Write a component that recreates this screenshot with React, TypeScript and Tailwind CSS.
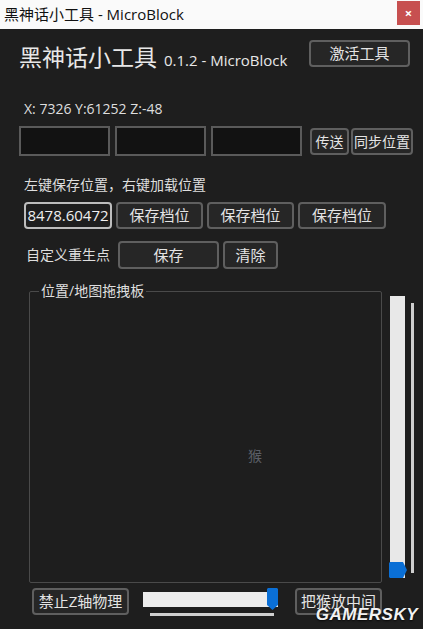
import type { ReactNode } from "react";

const FONT = "font-['Open_Sans','Noto_Sans_CJK_SC',sans-serif]";

function Btn({ children, className = "" }: { children: ReactNode; className?: string }) {
  return (
    <button
      className={`flex items-center justify-center whitespace-nowrap rounded-[4px] border-2 border-[#5f5f5f] bg-[#262626] px-0 text-[15px] leading-none text-[#e4e4e4] ${className}`}
    >
      {children}
    </button>
  );
}

function Box({ className = "" }: { className?: string }) {
  return <div className={`h-[30px] w-[91px] border-2 border-[#5a5a5a] bg-[#121212] ${className}`} />;
}

export default function App() {
  return (
    <div className={`relative flex h-[629px] w-[423px] flex-col overflow-hidden bg-[#1e1e1e] ${FONT}`}>
      {/* title bar */}
      <div className="flex h-[29px] items-start justify-between bg-[#fafafa]">
        <span className="ml-[4px] mt-[4px] text-[15px] leading-[20px] text-[#111]">黑神话小工具 - MicroBlock</span>
        <div className="mr-[3px] mt-[1px] flex h-[24px] w-[23px] items-center justify-center bg-[#c75050] text-[13px] font-bold leading-none text-white">
          ×
        </div>
      </div>

      {/* header */}
      <div className="mt-[11px] flex h-[33px] items-start justify-between pl-[19px] pr-[13px]">
        <div className="mt-[3px] flex items-baseline text-[#e8e8e8]">
          <span className="text-[23px] leading-[28px]">黑神话小工具</span>
          <span className="ml-[7px] text-[15px] leading-[20px]">0.1.2 - MicroBlock</span>
        </div>
        <Btn className="h-[27px] w-[101px]">激活工具</Btn>
      </div>

      {/* coordinates */}
      <div className="ml-[24px] mt-[28px] text-[14px] leading-[16px] text-[#dedede]">X: 7326 Y:61252 Z:-48</div>

      <div className="mt-[9px] flex h-[30px] items-start pl-[19px]">
        <Box />
        <Box className="ml-[5px]" />
        <Box className="ml-[5px]" />
        <Btn className="ml-[8px] mt-[2px] h-[27px] w-[39px] !text-[14px]">传送</Btn>
        <Btn className="ml-[2px] mt-[2px] h-[27px] w-[62px] !text-[14px]">同步位置</Btn>
      </div>

      <div className="ml-[24px] mt-[21px] text-[14px] leading-[16px] text-[#dedede]">左键保存位置，右键加载位置</div>

      <div className="mt-[9px] flex h-[27px] pl-[24px]">
        <div className="flex h-[27px] w-[88px] items-center justify-center rounded-[4px] border-2 border-[#bdbdbd] text-[15px] leading-none text-[#f0f0f0]">
          8478.60472
        </div>
        <Btn className="ml-[4px] h-[27px] w-[87px]">保存档位</Btn>
        <Btn className="ml-[4px] h-[27px] w-[87px]">保存档位</Btn>
        <Btn className="ml-[4px] h-[27px] w-[88px]">保存档位</Btn>
      </div>

      <div className="mt-[12px] flex h-[28px] items-center pl-[26px]">
        <span className="text-[14px] leading-[16px] text-[#dedede]">自定义重生点</span>
        <Btn className="ml-[8px] h-[28px] w-[101px]">保存</Btn>
        <Btn className="ml-[4px] h-[28px] w-[55px]">清除</Btn>
      </div>

      {/* drag board + vertical slider */}
      <div className="mt-[14px] flex pl-[29px]">
        <div className="relative h-[300px] w-[353px]">
          <fieldset className="h-[300px] w-[353px] rounded-[2px] border border-[#4a4a4a] px-0 pb-0">
            <legend className="ml-[9px] px-[2px] text-[14px] leading-[16px] text-[#dedede]">位置/地图拖拽板</legend>
          </fieldset>
          <span className="absolute left-[219px] top-[164px] text-[14px] leading-[18px] text-[#5b5e66]">猴</span>
        </div>
        <div className="ml-[7px] mt-[13px] flex">
          <div className="relative h-[282px] w-[17px] px-[1px]">
            <div className="h-full w-[15px] bg-[#e8e8e8]" />
            <svg className="absolute left-0 top-[266px]" width="19" height="16" viewBox="0 0 19 16">
              <polygon points="0,1 1,0 14,0 18,8 14,16 1,16 0,15" fill="#0a6fd6" />
            </svg>
          </div>
          <div className="ml-[5px] mt-[7px] h-[270px] w-[3px] bg-[#cfcfcf]" />
        </div>
      </div>

      {/* bottom row */}
      <div className="mt-[5px] flex h-[28px] items-start">
        <Btn className="ml-[32px] h-[27px] w-[97px]">禁止Z轴物理</Btn>
        <div className="ml-[14px] flex flex-col">
          <div className="relative mt-[4px] h-[15px] w-[135px] bg-[#ececec]">
            <svg className="absolute right-0 top-[-4px]" width="11" height="22" viewBox="0 0 11 22">
              <polygon points="0,1 1,0 10,0 11,1 11,17 5.5,22 0,17" fill="#0a6fd6" />
            </svg>
          </div>
          <div className="ml-[7px] mt-[6px] h-[3px] w-[124px] bg-[#cfcfcf]" />
        </div>
        <Btn className="ml-[17px] h-[27px] w-[87px]">把猴放中间</Btn>
      </div>

      <span className="absolute bottom-[6px] right-[5px] text-[17px] font-extrabold italic leading-none tracking-[0.5px] text-[#f2f2f2] [text-shadow:0_1px_2px_rgba(0,0,0,0.8)] font-['Liberation_Sans',sans-serif]">
        GAMERSKY
      </span>
    </div>
  );
}
